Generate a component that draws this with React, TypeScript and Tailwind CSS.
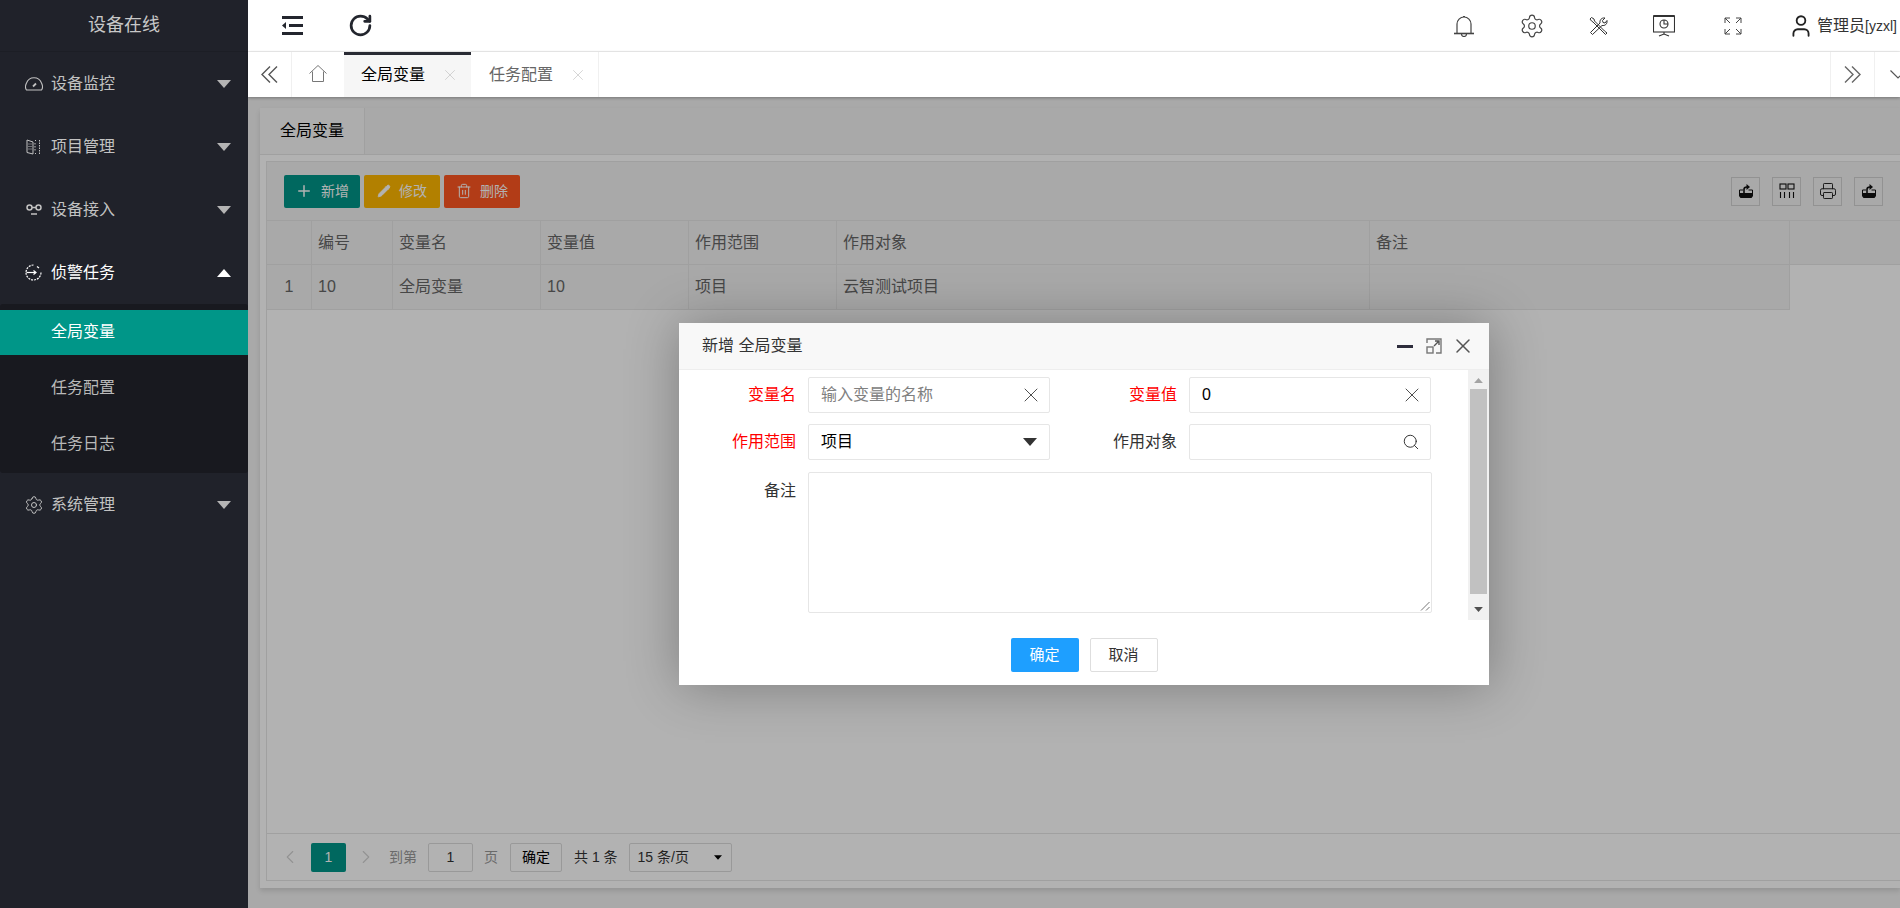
import { ChevronLeft, ChevronRight, Plus, Printer, RotateCw, Search, Settings, Trash2, User, X, Pencil } from "lucide-react";
import type { ReactNode } from "react";

const font = "font-['Liberation_Sans','Noto_Sans_CJK_SC',sans-serif]";

const Tri = ({ up, className }: { up?: boolean; className?: string }) => (
  <svg width="14" height="8" viewBox="0 0 14 8" className={className}>
    <path d={up ? "M0 8 7 0l7 8z" : "M0 0h14L7 8z"} fill="currentColor" />
  </svg>
);

const GaugeIcon = () => (
  <svg width="18" height="15" viewBox="0 0 18 15" fill="none" stroke="currentColor" strokeWidth="1.1">
    <path d="M1.500 14h15c1.500-2 1-5 0-7a8 8 0 0 0-15 0c-1 2-1.500 5 0 7z" />
    <path d="m8 10.500 3-3" strokeWidth="1.800" />
  </svg>
);
const BookIcon = () => (
  <svg width="15" height="16" viewBox="0 0 15 16" fill="none" stroke="currentColor" strokeWidth="1">
    <path d="M1 1l6 2v12l-6-1.500z" />
    <path d="M2.500 5h3M2.500 7.500h3M2.500 10h3" strokeDasharray="1 1" />
    <path d="M9 1.500h1M9 14.500h1M13.500 1v14" strokeDasharray="1.500 1" />
    <path d="M9 4v8" strokeDasharray="1.500 1.500" />
  </svg>
);
const LinkIcon = () => (
  <svg width="16" height="11" viewBox="0 0 16 11" fill="none" stroke="currentColor" strokeWidth="1.500">
    <circle cx="3.500" cy="3.500" r="2.500" />
    <circle cx="12.500" cy="3.500" r="2.500" />
    <path d="M6 3.500h4M5 10h6" />
  </svg>
);
const TaskIcon = () => (
  <svg width="17" height="17" viewBox="0 0 17 17" fill="none" stroke="currentColor" strokeWidth="1.200">
    <path d="M8.500 1a7.500 7.500 0 1 0 7.500 7.500" strokeDasharray="2 1" />
    <path d="M12 2.500l2 1.500" />
    <path d="M1.500 8.500h9" />
    <path d="m8.500 6.500 2.500 2-2.500 2" />
  </svg>
);

const Hamburger = () => (
  <svg width="21" height="19" viewBox="0 0 21 19" fill="#23262e">
    <rect x="0" y="0" width="21" height="3" />
    <rect x="7" y="8" width="14" height="3" />
    <rect x="0" y="16" width="21" height="3" />
    <path d="M0 9.500l4-3.500v7z" />
  </svg>
);

const BellIcon = () => (
  <svg width="22" height="22" viewBox="0 0 22 22" fill="none" stroke="#444" strokeWidth="1.200">
    <path d="M4 18V9a7 7 0 0 1 14 0v9" />
    <path d="M1 18.500h20" strokeWidth="1.600" />
    <path d="M8.500 19a2.500 2.500 0 0 0 5 0M10 1.500h2" />
  </svg>
);
const ToolsIcon = () => (
  <svg width="19" height="18" viewBox="0 0 19 18" fill="none" stroke="#333" strokeWidth="1">
    <path d="M1 2l1.500-1.500L5 2l.5 2 10 10 2.500 2-1.500 1.500L14 15 4 5 2.500 4z" />
    <path d="M1.500 15.500 11 6c-.5-3 1.500-5.500 5-5l-2.500 2.500.5 2 2 .5L18 3.500c.5 3.500-2 5.500-5 5L3.500 17.500z" />
  </svg>
);
const BoardIcon = () => (
  <svg width="22" height="22" viewBox="0 0 22 22" fill="none" stroke="#333" strokeWidth="1.100">
    <path d="M0.500 1h21" strokeWidth="2" />
    <rect x="0.500" y="1" width="21" height="16" />
    <circle cx="11" cy="9" r="4" />
    <path d="M11 5v4h4M11 17v2M6 21l5-2 5 2" />
  </svg>
);
const FullIcon = () => (
  <svg width="18" height="18" viewBox="0 0 18 18" fill="none" stroke="#444" strokeWidth="1">
    <path d="M1 6V1h5M1 1l5 5M12 1h5v5M17 1l-5 5M1 12v5h5M1 17l5-5M17 12v5h-5M17 17l-5-5" />
  </svg>
);
const DoubleChevron = ({ right, color }: { right?: boolean; color: string }) => (
  <svg width="17" height="17" viewBox="0 0 17 17" fill="none" stroke={color} strokeWidth="1.400">
    <path d={right ? "M1 .5l8 8-8 8M8 .5l8 8-8 8" : "M9 .5l-8 8 8 8M16 .5l-8 8 8 8"} />
  </svg>
);
const HomeIcon = () => (
  <svg width="18" height="17" viewBox="0 0 18 17" fill="none" stroke="#777" strokeWidth="1">
    <path d="M.500 8.500 9 .500l8.500 8M3.500 6.500v10h11v-10" />
  </svg>
);
const ExportIcon = () => (
  <svg width="16" height="16" viewBox="0 0 16 16">
    <path d="M1 10h14v3l-1.500 2h-11L1 13z" fill="#111" />
    <path d="M1.500 10V7H5M10.500 7h4v3" fill="none" stroke="#111" strokeWidth="1" />
    <path d="M6 10V6.500Q6 4 9 4" fill="none" stroke="#111" strokeWidth="1.600" />
    <path d="M8.500 1l3.500 3-3.500 3z" fill="#111" />
  </svg>
);
const ColsIcon = () => (
  <svg width="16" height="16" viewBox="0 0 16 16" fill="none" stroke="#111" strokeWidth="1.100">
    <rect x="1" y="1" width="6" height="5" />
    <rect x="9" y="1" width="6" height="5" />
    <path d="M1.500 9v6M5.500 9v6M10.500 9v6M14.500 9v6" />
  </svg>
);
const ExpandIcon = () => (
  <svg width="16" height="16" viewBox="0 0 16 16" fill="none" stroke="#777" strokeWidth="1.400">
    <path d="M1 5V1h14v14h-5" />
    <rect x="1" y="9" width="6" height="6" />
    <path d="M8 8l5-5M9 3h4v4" stroke="#555" />
  </svg>
);

const NavItem = ({ icon, label, up, active }: { icon: ReactNode; label: string; up?: boolean; active?: boolean }) => (
  <div className={`flex h-[63px] items-center pl-[23px] pr-[17px] ${active ? "text-white" : "text-[#c2c2c2]"}`}>
    <span className="flex w-[21px] justify-center">{icon}</span>
    <span className="ml-[7px] flex-1 text-[16px]">{label}</span>
    <Tri up={up} className={active ? "text-white" : "text-[#b4b4b4]"} />
  </div>
);

const SubItem = ({ label, active }: { label: string; active?: boolean }) => (
  <div className="flex h-[56px] items-center">
    <div className={`flex h-[45px] w-full items-center pl-[51px] text-[16px] ${active ? "bg-[#009688] text-white" : "text-[#b9b9b9]"}`}>{label}</div>
  </div>
);

const Sidebar = () => (
  <div className="flex w-[248px] shrink-0 flex-col bg-[#20222a]">
    <div className="flex h-[52px] items-center justify-center border-b border-[#1c1e25] text-[18px] text-[#c8c8c8]">设备在线</div>
    <NavItem icon={<GaugeIcon />} label="设备监控" />
    <NavItem icon={<BookIcon />} label="项目管理" />
    <NavItem icon={<LinkIcon />} label="设备接入" />
    <NavItem icon={<TaskIcon />} label="侦警任务" up active />
    <div className="h-[169px] rounded-[3px] bg-[#18191f]">
      <SubItem label="全局变量" active />
      <SubItem label="任务配置" />
      <SubItem label="任务日志" />
    </div>
    <NavItem icon={<Settings size={20} strokeWidth={1.2} />} label="系统管理" />
  </div>
);

const TopBar = () => (
  <div className="flex h-[52px] items-center border-b border-[#f0f0f0] bg-white">
    <div className="ml-[34px]"><Hamburger /></div>
    <div className="ml-[45px]"><RotateCw size={25} strokeWidth={2.6} color="#23262e" /></div>
    <div className="ml-auto flex items-center text-[#444]">
      <BellIcon />
      <Settings size={26} strokeWidth={1.1} className="ml-[44px]" />
      <span className="ml-[44px]"><ToolsIcon /></span>
      <span className="ml-[45px]"><BoardIcon /></span>
      <span className="ml-[49px]"><FullIcon /></span>
      <User size={26} strokeWidth={1.7} color="#222" className="ml-[46px]" />
      <span className="mr-[3px] ml-[3px] text-[16px] text-[#333]">管理员<span className="text-[14px]">[yzxl]</span></span>
    </div>
  </div>
);

const TabBar = () => (
  <div className="relative z-10 flex h-[45px] bg-white shadow-[0_1px_3px_rgba(0,0,0,0.3)]">
    <div className="flex w-[44px] items-center justify-center border-r border-[#f0f0f0]"><DoubleChevron color="#555" /></div>
    <div className="flex w-[52px] items-center justify-center pb-[2px]"><HomeIcon /></div>
    <div className="flex w-[127px] items-center border-t-[3px] border-[#292b34] bg-[#f6f6f6] pb-[3px] pl-[17px] text-[16px] text-black">
      <span>全局变量</span>
      <X size={18} strokeWidth={0.8} color="#bbb" className="ml-[16px]" />
    </div>
    <div className="flex w-[128px] items-center border-r border-[#f0f0f0] pl-[18px] text-[16px] text-[#666]">
      <span>任务配置</span>
      <X size={18} strokeWidth={0.8} color="#bbb" className="ml-[16px]" />
    </div>
    <div className="ml-auto flex w-[45px] items-center justify-center border-x border-[#f0f0f0]"><DoubleChevron right color="#666" /></div>
    <div className="flex w-[25px] items-center overflow-hidden">
      <svg width="16" height="9" viewBox="0 0 16 9" fill="none" stroke="#555" strokeWidth="1.200" className="ml-[15px] shrink-0">
        <path d="M.500 .500 8 8l7.500-7.500" />
      </svg>
    </div>
  </div>
);

const cols = "grid grid-cols-[45px_81px_148px_148px_148px_533px_420px_1fr]";
const rowCols = "grid grid-cols-[45px_81px_148px_148px_148px_533px_420px]";

const Toolbtn = ({ bg, icon, label }: { bg: string; icon: ReactNode; label: string }) => (
  <div className={`flex h-[33px] w-[76px] items-center justify-center gap-[8px] rounded-[2px] text-[14px] text-white ${bg}`}>
    {icon}
    <span>{label}</span>
  </div>
);

const IconBox = ({ children }: { children: ReactNode }) => (
  <div className="flex h-[29px] w-[29px] items-center justify-center border border-[#d2d2d2]">{children}</div>
);

const DataTable = () => (
  <div className="text-[16px]">
    <div className={`${cols} h-[45px] items-center border-y border-[#e6e6e6] bg-[#f2f2f2] text-[#666]`}>
      {["", "编号", "变量名", "变量值", "作用范围", "作用对象", "备注", ""].map((h, i) => (
        <div key={i} className={`flex h-full items-center pl-[6px] ${i < 7 ? "border-r border-[#e6e6e6]" : ""}`}>{h}</div>
      ))}
    </div>
    <div className={`${rowCols} h-[45px] w-[1523px] items-center border-b border-[#e6e6e6] bg-[#f2f2f2] text-[#666]`}>
      {["1", "10", "全局变量", "10", "项目", "云智测试项目", ""].map((c, i) => (
        <div key={i} className={`flex h-full items-center border-r border-[#e6e6e6] ${i === 0 ? "justify-center" : "pl-[6px]"}`}>{c}</div>
      ))}
    </div>
  </div>
);

const Pager = () => (
  <div className="flex h-[47px] items-center border-t border-[#e6e6e6] text-[14px] text-[#333]">
    <ChevronLeft size={22} strokeWidth={1.2} color="#d2d2d2" className="ml-[12px]" />
    <div className="ml-[10px] flex h-[29px] w-[35px] items-center justify-center rounded-[2px] bg-[#009688] text-white">1</div>
    <ChevronRight size={22} strokeWidth={1.2} color="#d2d2d2" className="ml-[9px]" />
    <span className="ml-[12px] text-[#999]">到第</span>
    <div className="ml-[11px] flex h-[29px] w-[45px] items-center justify-center rounded-[2px] border border-[#dcdcdc]">1</div>
    <span className="ml-[11px] text-[#999]">页</span>
    <div className="ml-[12px] flex h-[29px] w-[52px] items-center justify-center rounded-[2px] border border-[#dcdcdc] text-black">确定</div>
    <span className="ml-[12px]">共 1 条</span>
    <div className="relative ml-[11px] flex h-[29px] w-[103px] items-center rounded-[2px] border border-[#dcdcdc] pl-[8px]">
      15 条/页
      <Tri className="absolute top-[10px] right-[9px] h-[7px] w-[8px] text-black" />
    </div>
  </div>
);

const Content = () => (
  <div className="flex-1 overflow-hidden bg-[#f2f2f2] pt-[11px] pl-[12px]">
    <div className="flex h-[780px] flex-col bg-white shadow-[0_3px_5px_rgba(0,0,0,0.12)]">
      <div className="flex h-[47px] border-b border-[#e6e6e6] bg-[#f2f2f2]">
        <div className="flex w-[105px] items-center justify-center border-r border-[#e6e6e6] bg-[#f8f8f8] text-[16px] text-black">全局变量</div>
      </div>
      <div className="mt-[6px] mb-[7px] ml-[6px] flex flex-1 flex-col border-y border-l border-[#e6e6e6]">
        <div className="flex h-[58px] items-center bg-[#f2f2f2] pl-[17px]">
          <div className="flex gap-[4px]">
            <Toolbtn bg="bg-[#009688]" icon={<Plus size={18} strokeWidth={2} />} label="新增" />
            <Toolbtn bg="bg-[#ffb800]" icon={<Pencil size={14} strokeWidth={1.5} fill="white" />} label="修改" />
            <Toolbtn bg="bg-[#ff5722]" icon={<Trash2 size={16} strokeWidth={1.5} />} label="删除" />
          </div>
          <div className="mr-[17px] ml-auto flex gap-[12px]">
            <IconBox><ExportIcon /></IconBox>
            <IconBox><ColsIcon /></IconBox>
            <IconBox><Printer size={18} strokeWidth={1.3} color="#222" /></IconBox>
            <IconBox><ExportIcon /></IconBox>
          </div>
        </div>
        <DataTable />
        <div className="flex-1" />
        <Pager />
      </div>
    </div>
  </div>
);

const Field = ({ children }: { children: ReactNode }) => (
  <div className="flex h-[36px] w-[242px] items-center justify-between rounded-[2px] border border-[#e6e6e6] bg-white pr-[9px] pl-[12px] text-[16px]">{children}</div>
);

const Lbl = ({ text, red, w }: { text: string; red?: boolean; w: string }) => (
  <div className={`${w} pr-[12px] text-right text-[16px] ${red ? "text-[#ff0000]" : "text-[#333]"}`}>{text}</div>
);

const Dialog = () => (
  <div className="absolute top-[323px] left-[679px] z-20 flex h-[362px] w-[810px] flex-col bg-white shadow-[1px_1px_50px_rgba(0,0,0,0.3)]">
    <div className="flex h-[47px] items-center border-b border-[#eeeeee] bg-[#f8f8f8] pl-[23px] text-[16px] text-[#333]">
      <span>新增 全局变量</span>
      <div className="mr-[14px] ml-auto flex items-center">
        <div className="h-[3px] w-[16px] bg-[#2e2d3c]" />
        <span className="ml-[13px]"><ExpandIcon /></span>
        <X size={24} strokeWidth={1.5} color="#555" className="ml-[9px]" />
      </div>
    </div>
    <div className="flex h-[250px]">
      <div className="flex-1 pt-[7px]">
        <div className="flex items-center">
          <Lbl text="变量名" red w="w-[129px]" />
          <Field><span className="text-[#808080]">输入变量的名称</span><X size={24} strokeWidth={0.8} color="#222" className="-mr-[3px]" /></Field>
          <Lbl text="变量值" red w="w-[139px]" />
          <Field><span className="text-black">0</span><X size={24} strokeWidth={0.8} color="#222" className="-mr-[3px]" /></Field>
        </div>
        <div className="mt-[11px] flex items-center">
          <Lbl text="作用范围" red w="w-[129px]" />
          <Field><span className="text-black">项目</span><Tri className="mr-[3px] text-[#333]" /></Field>
          <Lbl text="作用对象" w="w-[139px]" />
          <Field><span /><Search size={18} strokeWidth={1.2} color="#222" className="mr-[1px]" /></Field>
        </div>
        <div className="mt-[12px] flex">
          <div className="pt-[7px]"><Lbl text="备注" w="w-[129px]" /></div>
          <div className="relative h-[141px] w-[624px] rounded-[2px] border border-[#e6e6e6]">
            <svg width="10" height="10" viewBox="0 0 10 10" className="absolute right-[1px] bottom-[1px]" stroke="#777" strokeWidth="1">
              <path d="M1 9.500 9.500 1M6 9.500 9.500 6" />
            </svg>
          </div>
        </div>
      </div>
      <div className="flex w-[21px] flex-col items-center bg-[#f1f1f1]">
        <Tri up className="mt-[8px] h-[5px] w-[9px] text-[#a3a3a3]" />
        <div className="mt-[6px] h-[205px] w-[17px] bg-[#c1c1c1]" />
        <Tri className="mt-auto mb-[8px] h-[5px] w-[9px] text-[#505050]" />
      </div>
    </div>
    <div className="flex flex-1 items-start justify-center gap-[11px] pt-[18px] text-[15px]">
      <div className="flex h-[34px] w-[68px] items-center justify-center rounded-[2px] bg-[#1e9fff] text-white">确定</div>
      <div className="flex h-[34px] w-[68px] items-center justify-center rounded-[2px] border border-[#dedede] text-[#333]">取消</div>
    </div>
  </div>
);

export default function App() {
  return (
    <div className={`relative flex h-[908px] w-[1900px] overflow-hidden ${font}`}>
      <Sidebar />
      <div className="relative flex min-w-0 flex-1 flex-col">
        <TopBar />
        <TabBar />
        <div className="relative flex flex-1 flex-col">
          <Content />
          <div className="absolute inset-0 bg-black/30" />
        </div>
      </div>
      <Dialog />
    </div>
  );
}
